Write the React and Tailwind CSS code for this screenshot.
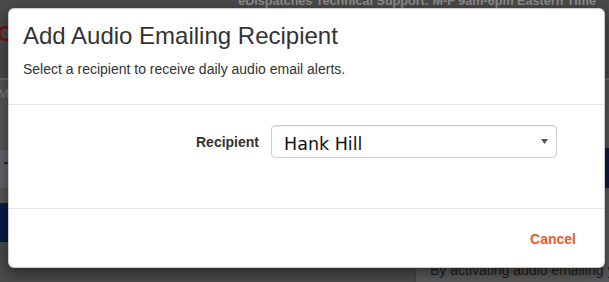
import React from "react";

export default function App() {
  return (
    <div className="relative w-[609px] h-[282px] overflow-hidden bg-[#4b4b4b] font-['Liberation_Sans',Arial,sans-serif]">
      {/* dimmed page behind the modal */}
      <div className="h-[78px] bg-[#4a4a4a] overflow-hidden">
        <div className="-mt-[9px] pr-[13px] text-right text-[12.6px] leading-[20px] font-bold text-[#8c8c8c] whitespace-nowrap">
          eDispatches Technical Support: M-F 9am-6pm Eastern Time
        </div>
        <div className="mt-[11px] -ml-[3px] text-[22px] leading-[24px] font-bold text-[#6e1616]">C</div>
      </div>
      <div className="h-[2px] bg-[#696969]" />
      <div className="h-[27px] bg-[#555555] text-[13px] leading-[27px] text-[#7d7d7d] -ml-[2px]">M</div>
      <div className="flex h-[175px]">
        <div className="w-[415px] shrink-0 flex flex-col">
          <div className="h-[43px] bg-[#575757]" />
          <div className="h-[38px] bg-[#62676c] pt-[12px] pl-[4px]">
            <div className="w-[6px] h-[2px] bg-[#2a2a2a]" />
          </div>
          <div className="h-[15px] bg-[#575757]" />
          <div className="h-[39px] bg-[#0d1a45]" />
          <div className="flex-1 bg-[#4b4b4b]" />
        </div>
        <div className="flex-1 min-w-0 overflow-hidden flex flex-col border-l border-[#444]">
          <div className="h-[41px] bg-[#575757]" />
          <div className="h-[40px] bg-[#0d1a45]" />
          <div className="h-[72px] bg-[#5b5b5b]" />
          <div className="flex-1 bg-[#5b5b5b] pl-[14px] text-[14px] leading-[20px] text-[#1e1e1e] whitespace-nowrap">
            By activating audio emailing you
          </div>
        </div>
      </div>

      {/* modal */}
      <div className="absolute left-[8px] top-[8px] w-[597px] h-[260px] bg-white rounded-[6px] border border-black/20 shadow-[0_5px_15px_rgba(0,0,0,0.5)] flex flex-col">
        <div className="px-[14px] pt-[14px] border-b border-[#e5e5e5] h-[96px]">
          <h4 className="m-0 text-[24px] leading-[26.4px] text-[#333] font-normal">Add Audio Emailing Recipient</h4>
          <p className="mt-[10px] text-[14px] leading-[20px] text-[#333]">
            Select a recipient to receive daily audio email alerts.
          </p>
        </div>
        <div className="h-[104px] border-b border-[#e5e5e5] pt-[20px] flex items-start">
          <div className="flex items-center w-full">
            <label className="w-[250px] text-right text-[14px] font-bold text-[#333] leading-[20px]">Recipient</label>
            <div className="ml-[12px] w-[286px] h-[33px] rounded-[4px] border border-[#cccccc] flex items-center pl-[12px] pr-[8px] shadow-[inset_0_1px_1px_rgba(0,0,0,0.075)]">
              <span className="flex-1 pt-[5px] font-['DejaVu_Sans',sans-serif] text-[17.5px] leading-[22px] text-[#111]">Hank Hill</span>
              <svg width="7" height="5" viewBox="0 0 7 5" className="mb-[1px]">
                <path d="M0 0 L7 0 L3.5 5 Z" fill="#555" />
              </svg>
            </div>
          </div>
        </div>
        <div className="flex-1 flex items-center justify-end pr-[28px]">
          <button className="text-[14px] font-bold text-[#eb5a2b] leading-[20px] mt-[1px]">Cancel</button>
        </div>
      </div>
    </div>
  );
}
